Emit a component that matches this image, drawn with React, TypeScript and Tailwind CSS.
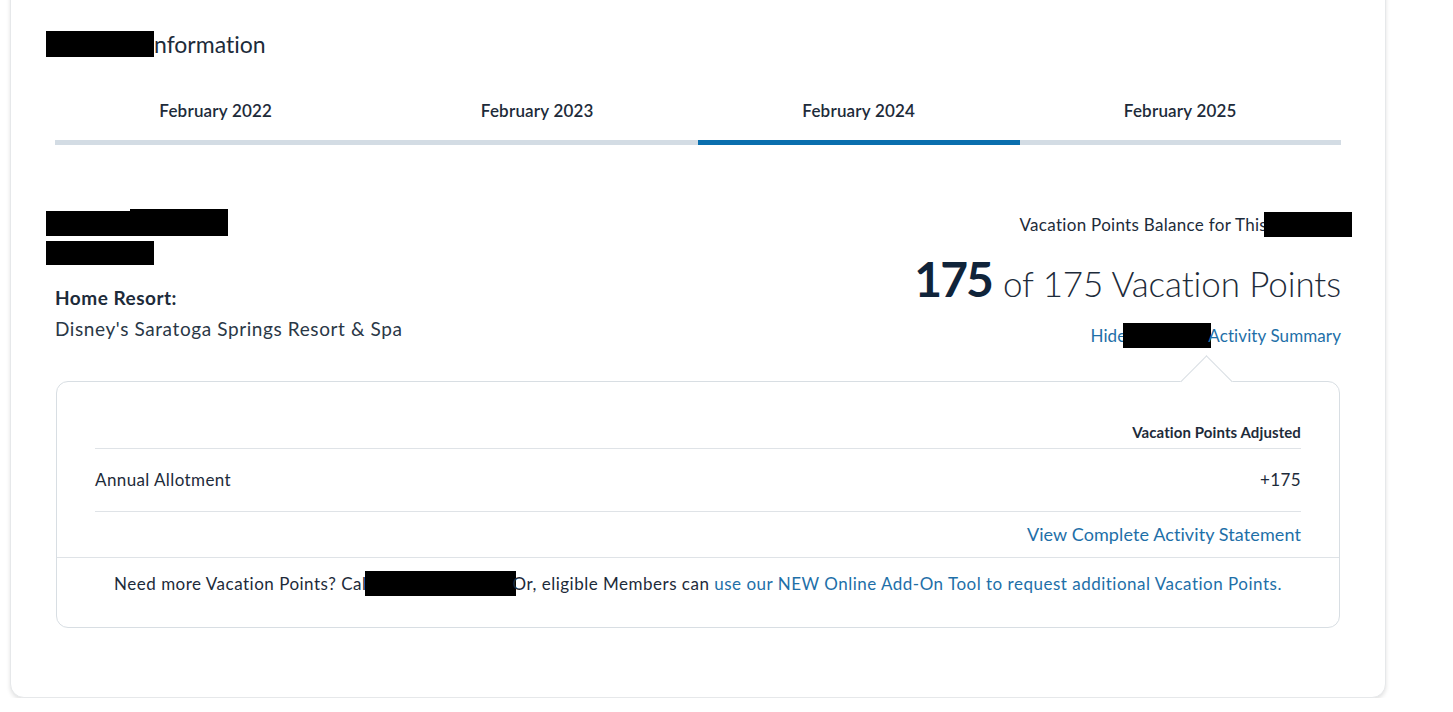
import React from "react";

export default function App() {
  const tabs = ["February 2022", "February 2023", "February 2024", "February 2025"];
  return (
    <div
      className="min-h-[712px] w-[1453px] bg-white text-[#1d2b3a] [font-variant-ligatures:none]"
      style={{ fontFamily: "Lato, 'Noto Sans', sans-serif" }}
    >
      <div className="ml-[10px] -mt-[20px] w-[1376px] rounded-[14px] border border-[#e6e8ea] bg-white shadow-[0_2px_4px_rgba(0,0,0,0.12)] pt-[50px] pb-[69px]">
        <div className="pl-[35px] flex items-center h-[26px] text-[23px] leading-[26px]">
          <span className="inline-block w-[108px] h-[26px] bg-black" />
          <span>nformation</span>
        </div>
        <div className="mx-[44px] mt-[43px] grid grid-cols-4">
          {tabs.map((t, i) => (
            <div
              key={t}
              className={
                "flex items-start justify-center h-[45px] pt-[1px] leading-[20px] text-[17px] font-semibold tracking-[0.2px] text-[#1d2b3a] border-b-[5px] " +
                (i === 2 ? "border-[#0a6fae]" : "border-[#d3dce4]")
              }
            >
              {t}
            </div>
          ))}
        </div>

        <div className="mx-[44px] mt-[64px] flex justify-between">
          <div className="flex flex-col">
            <div className="-ml-[9px] flex items-end">
              <span className="inline-block w-[84px] h-[25px] bg-black mt-[2px]" />
              <span className="inline-block w-[98px] h-[27px] bg-black" />
            </div>
            <span className="-ml-[9px] mt-[5px] inline-block w-[108px] h-[24px] bg-black" />
            <div className="mt-[22px] text-[19px] font-bold leading-[22px] tracking-[0.5px]">Home Resort:</div>
            <div className="mt-[9px] text-[19px] leading-[22px] text-[#2a3746] tracking-[0.6px]">
              Disney's Saratoga Springs Resort &amp; Spa
            </div>
          </div>
          <div className="flex flex-col items-end">
            <div className="-mr-[11px] mt-[3px] flex items-center text-[17px] leading-[25px] tracking-[0.3px]">
              <span>Vacation Points Balance for This</span>
              <span className="inline-block w-[88px] h-[25px] bg-black -ml-[3px]" />
            </div>
            <div className="mt-[16px] flex items-baseline leading-[52px]">
              <span className="text-[48px] font-bold text-[#10243a] tracking-[-2px]">175</span>
              <span className="ml-[11px] text-[35px] font-light text-[#1d2b3a] tracking-[-0.1px]">of 175 Vacation Points</span>
            </div>
            <div className="mt-[14px] flex items-center text-[17px] leading-[25px] text-[#1e6fa8] tracking-[0.1px]">
              <span>Hide</span>
              <span className="inline-block w-[88px] h-[25px] bg-black -ml-[3px]" />
              <span className="-ml-[3px]">Activity Summary</span>
            </div>
          </div>
        </div>

        <div className="relative mx-[45px] mt-[33px] rounded-[12px] border border-[#d8dee3] bg-white">
          <div className="absolute -top-[19px] left-[1131px] w-[37px] h-[37px] rotate-45 border-l border-t border-[#d8dee3] bg-white" />
          <div className="relative px-[38px]">
            <div className="pt-[40px] pb-[6px] text-right text-[15px] font-bold leading-[20px] tracking-[0.1px]">
              Vacation Points Adjusted
            </div>
            <div className="flex h-[64px] items-center justify-between border-t border-b border-[#dfe3e7] text-[17px] tracking-[0.4px]">
              <span>Annual Allotment</span>
              <span>+175</span>
            </div>
            <div className="flex h-[45px] items-center justify-end text-[18px] text-[#1e6fa8] tracking-[0.1px]">
              View Complete Activity Statement
            </div>
          </div>
          <div className="relative border-t border-[#dfe3e7] pt-[13px] pb-[31px] flex items-center justify-center text-[17px] leading-[25px] tracking-[0.5px]">
            <span>Need more Vacation Points? Cal</span>
            <span className="inline-block w-[151px] h-[25px] bg-black -ml-[2px]" />
            <span className="-ml-[3px]">Or, eligible Members can&nbsp;</span>
            <span className="text-[#1e6fa8]">use our NEW Online Add-On Tool to request additional Vacation Points.</span>
          </div>
        </div>
      </div>
    </div>
  );
}
